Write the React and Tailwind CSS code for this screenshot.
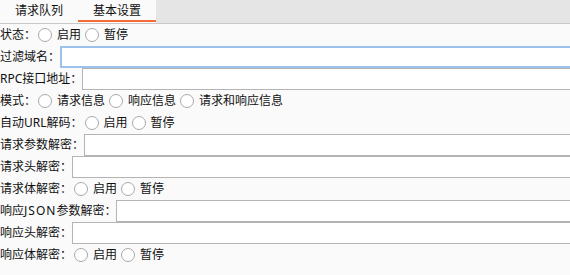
import React, { useState } from 'react';

const font = { fontFamily: '"Noto Sans", "Noto Sans CJK SC", sans-serif' };

const Radio = ({ label, checked, onClick, first }) => (
    <button
        type="button"
        onClick={onClick}
        className={`flex items-center ${first ? 'ml-[2px]' : 'ml-[4px]'}`}
    >
        <span className="w-[14px] h-[14px] rounded-full border border-[#a9a9a9] bg-white flex items-center justify-center">
            {checked && <span className="w-[6px] h-[6px] rounded-full bg-[#333]"></span>}
        </span>
        <span className="ml-[5px]">{label}</span>
    </button>
);

const RadioRow = ({ label, options }) => {
    const [value, setValue] = useState(null);
    return (
        <div className="flex items-center h-[22px]">
            <span>{label}</span>
            {options.map((opt, i) => (
                <Radio key={opt} label={opt} first={i === 0} checked={value === opt} onClick={() => setValue(opt)} />
            ))}
        </div>
    );
};

const InputRow = ({ label, focused }) => (
    <div className="flex items-stretch h-[22px]">
        <span className="flex items-center whitespace-nowrap">{label}</span>
        <input
            className={`flex-1 -mr-[2px] bg-white outline-none px-1 ${focused ? 'border-2 border-[#9cc1ea]' : 'border border-[#b4b4b4]'}`}
        />
    </div>
);

export default function App() {
    const [tab, setTab] = useState(1);
    const tabs = ['请求队列', '基本设置'];

    return (
        <div className="w-[570px] h-[275px] bg-[#fafafa] text-[12px] text-[#111] overflow-hidden" style={font}>
            <div className="flex h-[24px] bg-[#e5e5e5] border-b border-[#c8c8c8]">
                {tabs.map((t, i) => (
                    <button
                        key={t}
                        onClick={() => setTab(i)}
                        className="relative w-[78px] h-full bg-[#fafafa] flex items-center justify-center pb-[1px]"
                    >
                        {t}
                        {tab === i && (
                            <span className="absolute left-0 right-0 bottom-[1px] h-[2px] bg-[#f26a36]"></span>
                        )}
                    </button>
                ))}
            </div>

            <div className="flex flex-col">
                <RadioRow label="状态：" options={['启用', '暂停']} />
                <InputRow label="过滤域名：" focused />
                <InputRow label="RPC接口地址：" />
                <RadioRow label="模式：" options={['请求信息', '响应信息', '请求和响应信息']} />
                <RadioRow label="自动URL解码：" options={['启用', '暂停']} />
                <InputRow label="请求参数解密：" />
                <InputRow label="请求头解密：" />
                <RadioRow label="请求体解密：" options={['启用', '暂停']} />
                <InputRow label={<>响应<span className="tracking-[1px]">JSON</span>参数解密：</>} />
                <InputRow label="响应头解密：" />
                <RadioRow label="响应体解密：" options={['启用', '暂停']} />
            </div>
        </div>
    );
}
